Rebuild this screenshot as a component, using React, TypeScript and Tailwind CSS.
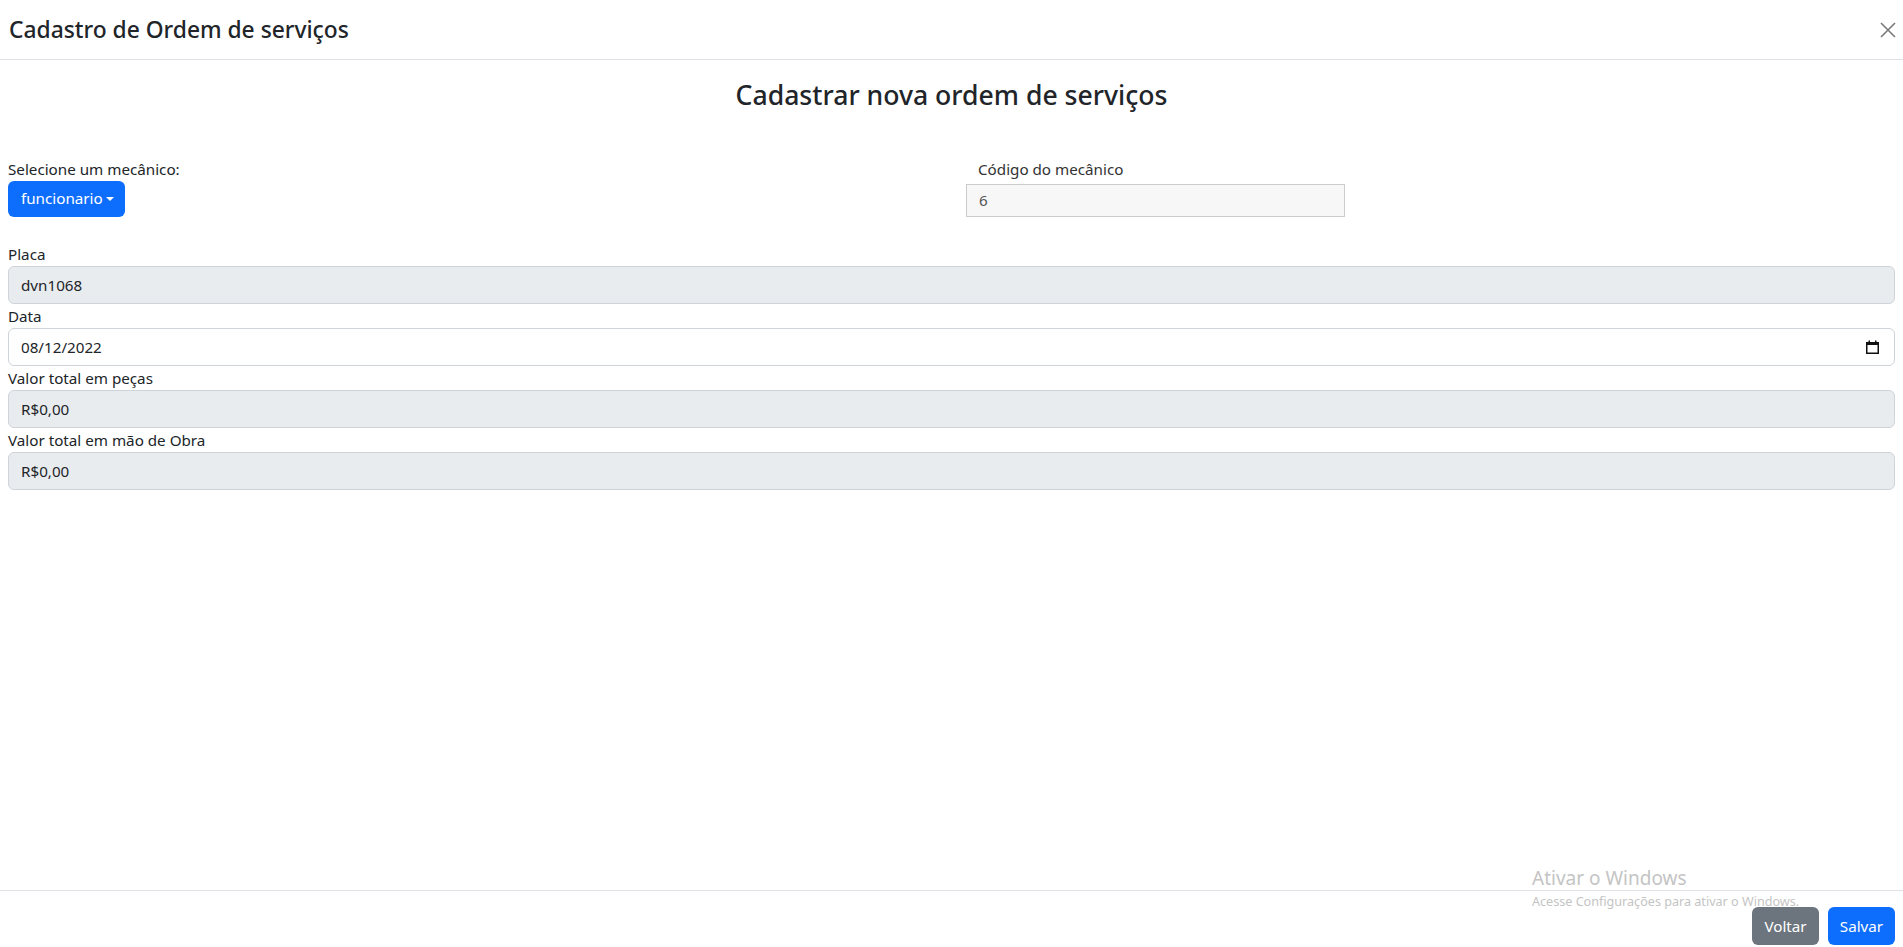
import React from "react";

function CloseIcon() {
  return (
    <svg width="16" height="16" viewBox="0 0 16 16" fill="none">
      <path d="M1 1L15 15M15 1L1 15" stroke="#7a7a7a" strokeWidth="1.6" />
    </svg>
  );
}

function CalendarIcon() {
  return (
    <svg width="13" height="14" viewBox="0 0 13 14" fill="none">
      <rect x="0.75" y="2.75" width="11.5" height="10.5" stroke="#111" strokeWidth="1.5" />
      <rect x="0" y="2" width="13" height="3" fill="#111" />
      <rect x="2.5" y="0.5" width="1.5" height="2" fill="#111" />
      <rect x="9" y="0.5" width="1.5" height="2" fill="#111" />
    </svg>
  );
}

function Field({ label, value, white, icon }: { label: string; value: string; white?: boolean; icon?: boolean }) {
  return (
    <div className="flex flex-col">
      <label className="h-[24px] text-[15.2px] leading-[24px]">{label}</label>
      <div
        className={`flex h-[38px] items-center justify-between rounded-[6px] border border-[#ced4da] px-[12px] text-[15.2px] leading-[24px] ${
          white ? "bg-white" : "bg-[#e9ecef]"
        }`}
      >
        <span>{value}</span>
        {icon ? (
          <span className="mr-[3px] flex items-center">
            <CalendarIcon />
          </span>
        ) : null}
      </div>
    </div>
  );
}

export default function App() {
  return (
    <div
      className="relative flex h-screen flex-col overflow-hidden bg-white text-[#212529]"
      style={{ fontFamily: '"Noto Sans", "Open Sans", sans-serif' }}
    >
      <header className="flex h-[60px] shrink-0 items-center justify-between border-b border-[#dee2e6] pl-[9px] pr-[7px]">
        <h5 className="text-[22.8px] font-medium leading-[1.2]">Cadastro de Ordem de serviços</h5>
        <button className="flex items-center justify-center">
          <CloseIcon />
        </button>
      </header>

      <main className="flex-1 px-[8px]">
        <h3 className="mt-[19px] text-center text-[26.6px] font-medium leading-[33.6px]">
          Cadastrar nova ordem de serviços
        </h3>

        <div className="mt-[44px] flex">
          <div className="w-[958px] shrink-0">
            <div className="h-[24px] text-[15.2px] leading-[24px]">Selecione um mecânico:</div>
            <button className="flex h-[36px] items-center rounded-[6px] bg-[#0d6efd] pl-[13px] pr-[11px] text-[15.2px] text-white">
              funcionario
              <span className="ml-[3px] mt-[1px] h-0 w-0 border-x-[4.5px] border-t-[4.5px] border-x-transparent border-t-white" />
            </button>
          </div>
          <div className="w-[379px] shrink-0">
            <div className="h-[24px] pl-[12px] text-[15.2px] leading-[24px] text-[#333]">Código do mecânico</div>
            <div className="mt-[3px] flex h-[33px] items-center border border-[#cccccc] bg-[#f7f7f7] px-[12px] text-[15.2px] text-[#555]">
              6
            </div>
          </div>
        </div>

        <div className="mt-[25px] flex flex-col">
          <Field label="Placa" value="dvn1068" />
          <Field label="Data" value="08/12/2022" white icon />
          <Field label="Valor total em peças" value="R$0,00" />
          <Field label="Valor total em mão de Obra" value="R$0,00" />
        </div>
      </main>

      <footer className="flex h-[57px] shrink-0 items-start justify-end gap-[9px] border-t border-[#dee2e6] pr-[8px] pt-[16px]">
        <button className="h-[38px] w-[67px] rounded-[6px] bg-[#6c757d] text-[15.2px] text-white">Voltar</button>
        <button className="h-[38px] w-[67px] rounded-[6px] bg-[#0d6efd] text-[15.2px] text-white">Salvar</button>
      </footer>

      <div className="pointer-events-none absolute left-[1532px] top-[865px] text-[#c4c4c4]">
        <div className="text-[19px] leading-[27px]">Ativar o Windows</div>
        <div className="mt-[1px] text-[12.6px] leading-[18px]">Acesse Configurações para ativar o Windows.</div>
      </div>
    </div>
  );
}
